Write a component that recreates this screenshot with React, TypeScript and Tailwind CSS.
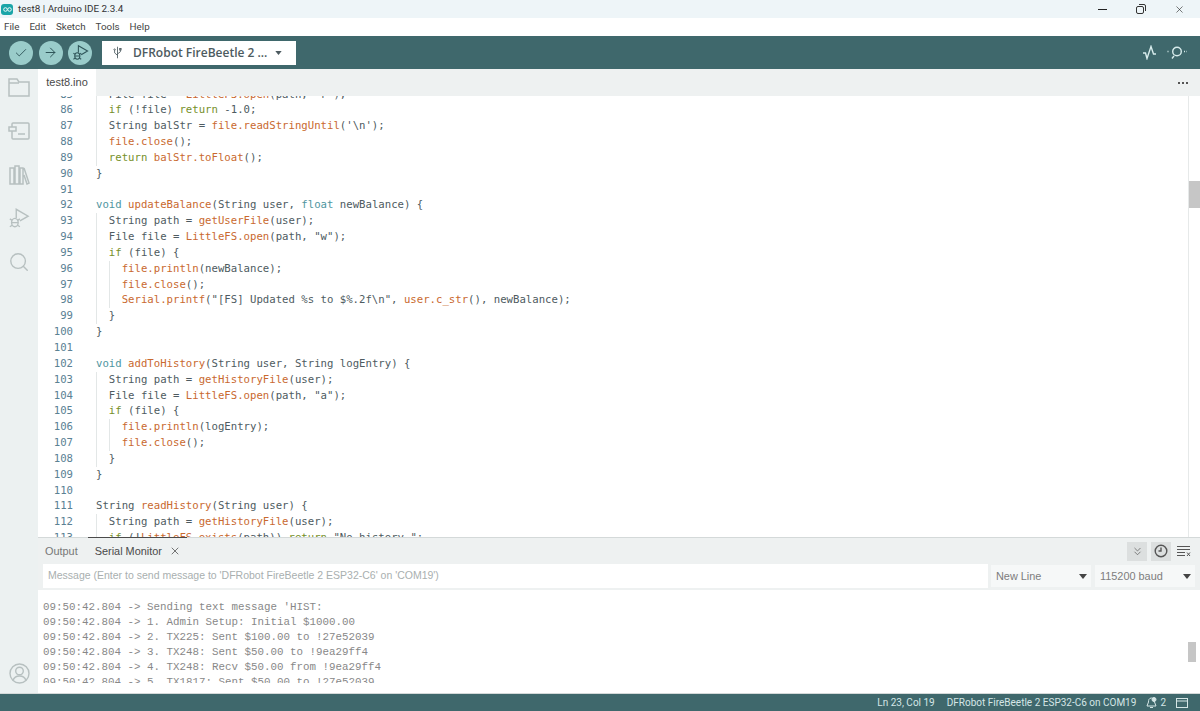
import { Check, ArrowRight, X, ChevronsDown, Search } from 'lucide-react';

const CODE = [
  '  File file = ~oLittleFS.open~(path, "r");',
  '  ~gif~ (!file) ~greturn~ -1.0;',
  "  String balStr = ~ofile.readStringUntil~('\\n');",
  '  ~ofile.close~();',
  '  ~greturn~ ~obalStr.toFloat~();',
  '}',
  '',
  '~tvoid~ ~oupdateBalance~(String user, ~tfloat~ newBalance) {',
  '  String path = ~ogetUserFile~(user);',
  '  File file = ~oLittleFS.open~(path, "w");',
  '  ~gif~ (file) {',
  '    ~ofile.println~(newBalance);',
  '    ~ofile.close~();',
  '    ~oSerial.printf~("[FS] Updated %s to $%.2f\\n", ~ouser.c_str~(), newBalance);',
  '  }',
  '}',
  '',
  '~tvoid~ ~oaddToHistory~(String user, String logEntry) {',
  '  String path = ~ogetHistoryFile~(user);',
  '  File file = ~oLittleFS.open~(path, "a");',
  '  ~gif~ (file) {',
  '    ~ofile.println~(logEntry);',
  '    ~ofile.close~();',
  '  }',
  '}',
  '',
  'String ~oreadHistory~(String user) {',
  '  String path = ~ogetHistoryFile~(user);',
  '  ~gif~ (!~oLittleFS.exists~(path)) ~greturn~ "No history.";',
];

const SERIAL = [
  "09:50:42.804 -> Sending text message 'HIST:",
  '09:50:42.804 -> 1. Admin Setup: Initial $1000.00',
  '09:50:42.804 -> 2. TX225: Sent $100.00 to !27e52039',
  '09:50:42.804 -> 3. TX248: Sent $50.00 to !9ea29ff4',
  '09:50:42.804 -> 4. TX248: Recv $50.00 from !9ea29ff4',
  '09:50:42.804 -> 5. TX1817: Sent $50.00 to !27e52039',
];

const TOKEN_COLOR: Record<string, string> = {
  o: 'text-[#c9692f]',
  g: 'text-[#76902a]',
  t: 'text-[#4f96a0]',
};

function CodeLine({ text }: { text: string }) {
  const indent = text.length - text.trimStart().length;
  const parts = text.trimStart().split('~');

  return (
    <div className="flex h-[15.85px] items-center leading-[15.85px]">
      {Array.from({ length: indent / 2 }).map((_, i) => (
        <span key={i} className="inline-block h-full w-[2ch] shrink-0 border-l border-[#e3e7e7]" />
      ))}
      <span className="whitespace-pre">
        {parts.map((part, i) =>
          i % 2 === 1 ? (
            <span key={i} className={TOKEN_COLOR[part[0]]}>{part.slice(1)}</span>
          ) : (
            <span key={i}>{part}</span>
          )
        )}
      </span>
    </div>
  );
}

function RoundButton({ children }: { children: React.ReactNode }) {
  return (
    <div className="flex h-[24px] w-[24px] items-center justify-center rounded-full bg-[#9accca] text-[#2f5559]">
      {children}
    </div>
  );
}

function DebugGlyph({ size = 18 }: { size?: number }) {
  return (
    <svg width={size} height={size} viewBox="0 0 24 24" fill="none" stroke="currentColor" strokeWidth="1.5">
      <path d="M9 12V2.5L22 10l-9 5.2" />
      <ellipse cx="7.5" cy="17" rx="3.6" ry="4.6" />
      <path d="M4 17h7M2 13l2.5 1.6M13 13l-2.5 1.6M2 21.5l2.5-1.6M13 21.5l-2.5-1.6" />
    </svg>
  );
}

function SideIcon({ children }: { children: React.ReactNode }) {
  return <div className="flex h-[43.5px] items-center justify-center text-[#b7c0c0]">{children}</div>;
}

function Select({ label, width }: { label: string; width: string }) {
  return (
    <div className={`flex h-[22px] items-center justify-between bg-[#f6f8f8] pl-[5px] pr-[4px] text-[10.9px] text-[#7d7d7d] ${width}`}>
      <span>{label}</span>
      <svg width="8" height="5" viewBox="0 0 8 5"><path d="M0 0h8L4 5z" fill="#444" /></svg>
    </div>
  );
}

export default function App() {
  return (
    <div className="flex h-[711px] w-[1200px] flex-col overflow-hidden bg-white font-['Roboto',sans-serif]">
      {/* title bar */}
      <div className="flex h-[18px] items-center bg-[#eef5f8] text-[9.9px] text-[#333]">
        <div className="ml-[1px] flex h-[11px] w-[12px] items-center justify-center rounded-[3px] bg-[#1aa5a8]">
          <svg width="9" height="5" viewBox="0 0 20 10" fill="none" stroke="#fff" strokeWidth="2">
            <circle cx="5.5" cy="5" r="4" />
            <circle cx="14.5" cy="5" r="4" />
          </svg>
        </div>
        <span className="ml-[5px]">test8 | Arduino IDE 2.3.4</span>
        <div className="ml-auto flex items-center">
          <div className="h-px w-[9px] bg-[#222]" />
          <svg className="ml-[29px]" width="10" height="10" viewBox="0 0 10 10" fill="none" stroke="#333">
            <rect x="0.5" y="2.5" width="7" height="7" rx="1.5" />
            <path d="M3 .5h5a1.5 1.5 0 0 1 1.5 1.5v5" />
          </svg>
          <X className="ml-[28px] mr-[15px] text-[#222]" size={11} strokeWidth={1.3} />
        </div>
      </div>

      {/* menu bar */}
      <div className="flex h-[18px] items-center gap-[10px] pl-[4px] text-[9.8px] text-[#444]">
        <span>File</span>
        <span>Edit</span>
        <span>Sketch</span>
        <span>Tools</span>
        <span>Help</span>
      </div>

      {/* toolbar */}
      <div className="flex h-[33px] items-center bg-[#3f686c] pl-[9px] pr-[13px]">
        <div className="flex items-center gap-[5.5px]">
          <RoundButton><Check size={14} strokeWidth={1.6} /></RoundButton>
          <RoundButton><ArrowRight size={15} strokeWidth={1.6} /></RoundButton>
          <RoundButton><DebugGlyph size={17} /></RoundButton>
        </div>
        <div className="ml-[10px] flex h-[24px] w-[194px] items-center bg-white pl-[11px] font-['Open_Sans',sans-serif] text-[12px] font-semibold text-[#4d5b60]">
          <svg width="9" height="13" viewBox="0 0 12 18" fill="none" stroke="#4d5b60" strokeWidth="1.2">
            <path d="M6 1v16M6 13L2 9.5V6M6 11l4-3V5" />
            <circle cx="2" cy="5" r="1" />
            <rect x="9" y="3.5" width="2" height="2" />
          </svg>
          <span className="ml-[11px] whitespace-nowrap">DFRobot FireBeetle 2 ...</span>
          <svg className="ml-[8px]" width="7" height="4" viewBox="0 0 8 5"><path d="M0 0h8L4 5z" fill="#4d5b60" /></svg>
        </div>
        <div className="ml-auto flex items-center gap-[10px] text-[#d8ecec]">
          <svg width="15" height="15" viewBox="0 0 15 15" fill="none" stroke="currentColor" strokeWidth="1.4">
            <path d="M1 8h2.500L5 13.500 9 1.500 11.500 9H14" />
          </svg>
          <svg width="20" height="15" viewBox="0 0 20 15" fill="none" stroke="currentColor" strokeWidth="1.4">
            <circle cx="10" cy="6.500" r="4.300" />
            <path d="M0.500 6.500h2M17 6.500h2.500" strokeDasharray="1 1" />
            <path d="M7 11l-2 2.500" />
          </svg>
        </div>
      </div>

      <div className="flex min-h-0 flex-1">
        {/* activity bar */}
        <div className="flex w-[38px] flex-col items-center bg-[#ecf1f1]">
          <div className="-mt-[3px] flex-col">
            <SideIcon>
              <svg width="22" height="19" viewBox="0 0 22 19" fill="none" stroke="currentColor" strokeWidth="1.5">
                <path d="M1 1h8l2 3h10v14H1zM1 5h10" />
              </svg>
            </SideIcon>
            <SideIcon>
              <svg width="22" height="18" viewBox="0 0 22 18" fill="none" stroke="currentColor" strokeWidth="1.5">
                <path d="M4 5V2a1 1 0 0 1 1-1h15a1 1 0 0 1 1 1v14a1 1 0 0 1-1 1H5a1 1 0 0 1-1-1V9" />
                <rect x="1" y="5" width="7" height="4" />
                <path d="M10 12h7" />
              </svg>
            </SideIcon>
            <SideIcon>
              <svg width="21" height="20" viewBox="0 0 21 20" fill="none" stroke="currentColor" strokeWidth="1.5">
                <path d="M1 3h4v16H1zM6 1h4v18H6zM11 3h3v16h-3zM15 3l5 15-2 1-3-9" />
              </svg>
            </SideIcon>
            <SideIcon><DebugGlyph size={22} /></SideIcon>
            <SideIcon><Search size={22} strokeWidth={1.5} /></SideIcon>
          </div>
          <div className="mb-[9px] mt-auto text-[#b7c0c0]">
            <svg width="21" height="21" viewBox="0 0 21 21" fill="none" stroke="currentColor" strokeWidth="1.4">
              <circle cx="10.5" cy="10.5" r="9.5" />
              <circle cx="10.5" cy="8" r="3.8" />
              <path d="M4 17.500c1-3 3.500-4.500 6.500-4.500s5.500 1.500 6.500 4.500" />
            </svg>
          </div>
        </div>

        <div className="flex min-w-0 flex-1 flex-col">
          {/* tabs */}
          <div className="flex h-[27px] items-center bg-[#eef1f1]">
            <div className="flex h-full w-[58px] items-center justify-center bg-white font-['Liberation_Sans',sans-serif] text-[11px] text-[#4a4a4a]">
              test8.ino
            </div>
            <div className="ml-auto mr-[12px] flex gap-[2px]">
              <span className="h-[2px] w-[2px] bg-[#555]" />
              <span className="h-[2px] w-[2px] bg-[#555]" />
              <span className="h-[2px] w-[2px] bg-[#555]" />
            </div>
          </div>

          {/* editor */}
          <div className="flex h-[441px] overflow-hidden font-['DejaVu_Sans_Mono',monospace] text-[10.67px] text-[#4e5b61]">
            <div className="-mt-[9.5px] w-[35px] shrink-0 text-right leading-[15.85px] text-[#5b8194]">
              {CODE.map((_, i) => (
                <div key={i} className="h-[15.85px]">{85 + i}</div>
              ))}
            </div>
            <div className="-mt-[9.5px] ml-[23px] min-w-0 flex-1">
              {CODE.map((line, i) => (
                <CodeLine key={i} text={line} />
              ))}
            </div>
            <div className="w-[12px] shrink-0 border-l border-[#e6e9e9]">
              <div className="mt-[85px] h-[27px] bg-[#c6c6c6]" />
            </div>
          </div>

          {/* panel */}
          <div className="flex min-h-0 flex-1 flex-col border-t border-[#d4d9d9] bg-[#eef1f1]">
            <div className="flex h-[26px] shrink-0 items-stretch font-['Liberation_Sans',sans-serif] text-[10.9px]">
              <div className="ml-[7px] flex items-center text-[#777]">Output</div>
              <div className="-mt-px ml-[10px] flex items-center gap-[7px] border-t border-[#4b4b4b] pl-[7px] pr-[6px] text-[#4a4a4a]">
                <span>Serial Monitor</span>
                <X size={12} strokeWidth={1.5} />
              </div>
              <div className="ml-auto mr-[7px] flex items-center gap-[4px] text-[#555]">
                <div className="flex h-[19px] w-[20px] items-center justify-center bg-[#dcdfdf]">
                  <ChevronsDown size={13} strokeWidth={1.3} />
                </div>
                <div className="flex h-[19px] w-[20px] items-center justify-center bg-[#dcdfdf]">
                  <svg width="14" height="14" viewBox="0 0 14 14" fill="none" stroke="currentColor" strokeWidth="1.4">
                    <circle cx="7" cy="7" r="5.800" />
                    <path d="M7 3.500V7H4.500" />
                  </svg>
                </div>
                <div className="flex h-[19px] w-[18px] items-center justify-center">
                  <svg width="14" height="12" viewBox="0 0 14 12" fill="none" stroke="currentColor">
                    <path d="M0 1.500h13M0 4.500h13M0 7.500h8M0 10.500h8M10 7.500l3 3.500M13 7.500l-3 3.500" />
                  </svg>
                </div>
              </div>
            </div>

            <div className="flex h-[26px] shrink-0 gap-[3px] pl-[5px] pr-[5px] font-['Liberation_Sans',sans-serif]">
              <div className="flex h-[24px] flex-1 items-center bg-white pl-[5px] text-[10.5px] text-[#a9afaf]">
                Message (Enter to send message to 'DFRobot FireBeetle 2 ESP32-C6' on 'COM19')
              </div>
              <div className="flex gap-[4px] pt-px">
                <Select label="New Line" width="w-[100px]" />
                <Select label="115200 baud" width="w-[100px]" />
              </div>
            </div>

            <div className="flex min-h-0 flex-1 bg-white">
              <div className="min-w-0 flex-1 pl-[5px] pt-[10px]">
                <div className="h-[83px] overflow-hidden font-['Liberation_Mono',monospace] text-[10.83px] leading-[15px] text-[#888]">
                  {SERIAL.map((line, i) => (
                    <div key={i} className="whitespace-pre">{line}</div>
                  ))}
                </div>
              </div>
              <div className="w-[12px] shrink-0 pr-[4px]">
                <div className="mt-[52px] h-[20px] bg-[#c6c6c6]" />
              </div>
            </div>
          </div>
        </div>
      </div>

      {/* status bar */}
      <div className="flex h-[18px] shrink-0 items-center justify-end border-t border-[#d4d9d9] bg-[#3f686c] pr-[12px] text-[10px] text-[#d5e6e6]">
        <span>Ln 23, Col 19</span>
        <span className="ml-[12px]">DFRobot FireBeetle 2 ESP32-C6 on COM19</span>
        <svg className="ml-[10px]" width="11" height="12" viewBox="0 0 11 12" fill="none" stroke="currentColor">
          <path d="M5.500 1C3 1 2.500 3 2.500 5L1 9h9L8.500 5c0-2-.5-4-3-4zM4 10.500h3" />
          <circle cx="8" cy="2.500" r="2" fill="currentColor" />
        </svg>
        <span className="ml-[3px]">2</span>
        <svg className="ml-[10px]" width="12" height="10" viewBox="0 0 12 10" fill="none" stroke="currentColor">
          <rect x="0.500" y="0.500" width="11" height="9" />
          <path d="M0 3h12" />
        </svg>
      </div>
    </div>
  );
}
